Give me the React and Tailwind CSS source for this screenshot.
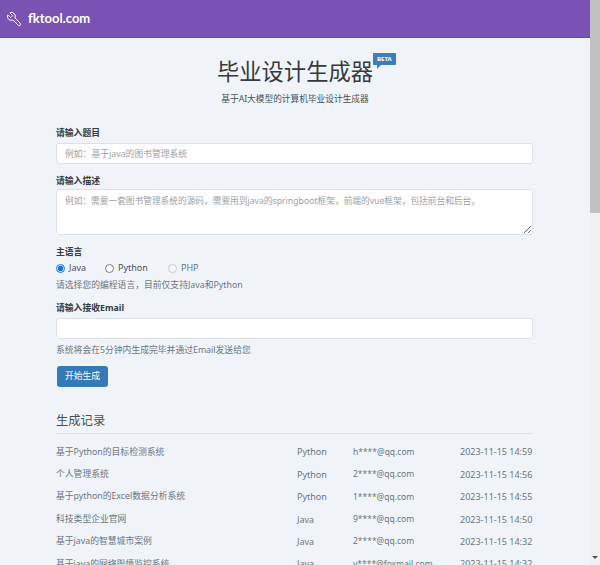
import { Wrench } from 'lucide-react'

const records = [
  { title: '基于Python的目标检测系统', lang: 'Python', email: 'h****@qq.com', time: '2023-11-15 14:59' },
  { title: '个人管理系统', lang: 'Python', email: '2****@qq.com', time: '2023-11-15 14:56' },
  { title: '基于python的Excel数据分析系统', lang: 'Python', email: '1****@qq.com', time: '2023-11-15 14:55' },
  { title: '科技类型企业官网', lang: 'Java', email: '9****@qq.com', time: '2023-11-15 14:50' },
  { title: '基于java的智慧城市案例', lang: 'Java', email: '2****@qq.com', time: '2023-11-15 14:32' },
  { title: '基于java的网络舆情监控系统', lang: 'Java', email: 'y****@foxmail.com', time: '2023-11-15 14:32' },
]

const font = 'font-["Noto_Sans","Noto_Sans_CJK_SC",sans-serif]'

function Radio({ label, checked = false, disabled = false, className = '' }) {
  return (
    <label className={`flex items-center gap-[4px] text-[9px] ${disabled ? 'text-[#6c757d]' : 'text-[#495057]'} ${className}`}>
      <input
        type="radio"
        name="lang"
        defaultChecked={checked}
        disabled={disabled}
        className="m-0 h-[9px] w-[9px] accent-[#0d6efd]"
      />
      {label}
    </label>
  )
}

export default function App() {
  return (
    <div className={`flex h-[565px] w-[600px] overflow-hidden bg-[#f0f4f9] text-[8.8px] text-[#343a40] ${font}`}>
      <div className="w-[590px] shrink-0">
        {/* header */}
        <header className="flex h-[38px] items-center gap-[6px] border-b border-[#6a469f] bg-[#7952b3] pl-[6px] text-white">
          <Wrench size={16} strokeWidth={1.5} className="-scale-x-100" />
          <span className='font-["Lato",sans-serif] text-[13px] leading-none font-bold'>fktool.com</span>
        </header>

        <main className="px-[56px]">
          {/* title */}
          <div className="flex flex-col items-center pt-[18px]">
            <div className="relative">
              <h1 className="text-[22.3px] leading-[32px] font-normal text-[#343a40]">毕业设计生成器</h1>
              <span className="absolute top-[-3px] left-full rounded-[1px] bg-[#3a7ebc] px-[4px] py-[2px] font-sans text-[6px] leading-[8px] font-bold text-white">
                BETA
              </span>
              <span className="absolute top-[9px] left-[calc(100%+4px)] h-0 w-0 border-t-[4px] border-r-[4px] border-t-[#3a7ebc] border-r-transparent" />
            </div>
            <p className="mt-[4px] text-[8.7px] leading-[14px] text-[#495057]">基于AI大模型的计算机毕业设计生成器</p>
          </div>

          {/* form */}
          <form className="mt-[20px] w-[477px]">
            <label className="block text-[8.8px] leading-[14px] font-bold">请输入题目</label>
            <input
              className="mt-[3px] block h-[21px] w-full rounded-[3px] border border-[#dee2e6] bg-white px-[8px] text-[8.8px] outline-none placeholder:text-[#9a9fa5]"
              placeholder="例如：基于java的图书管理系统"
            />

            <label className="mt-[10px] block text-[8.8px] leading-[14px] font-bold">请输入描述</label>
            <textarea
              className="mt-[1px] block h-[46px] w-full rounded-[3px] border border-[#dee2e6] bg-white px-[8px] py-[4px] text-[8.7px] leading-[14px] outline-none placeholder:text-[#9a9fa5]"
              placeholder="例如：需要一套图书管理系统的源码，需要用到java的springboot框架，前端的vue框架，包括前台和后台。"
            />

            <label className="mt-[10px] block text-[8.8px] leading-[14px] font-bold">主语言</label>
            <div className="mt-[2px] flex h-[14px] items-center">
              <Radio label="Java" checked className="w-[49px]" />
              <Radio label="Python" className="w-[63px]" />
              <Radio label="PHP" disabled />
            </div>
            <p className="mt-[3px] text-[8.8px] leading-[14px] text-[#6c757d]">请选择您的编程语言，目前仅支持Java和Python</p>

            <label className="mt-[9px] block text-[8.8px] leading-[14px] font-bold">请输入接收Email</label>
            <input className="mt-[3px] block h-[21px] w-full rounded-[3px] border border-[#dee2e6] bg-white" />
            <p className="mt-[4px] text-[8.8px] leading-[14px] text-[#6c757d]">系统将会在5分钟内生成完毕并通过Email发送给您</p>

            <button
              type="button"
              className="mt-[9px] ml-[1px] h-[21px] w-[51px] rounded-[3px] bg-[#337ab7] text-[8.8px] text-white"
            >
              开始生成
            </button>
          </form>

          {/* records */}
          <section className="mt-[24px] w-[477px]">
            <h2 className="border-b border-[#dee2e6] pb-[2px] text-[12.3px] leading-[20px] font-normal text-[#495057]">生成记录</h2>
            <div className="mt-[7px]">
              {records.map((r) => (
                <div key={r.time + r.title} className="grid h-[22.4px] grid-cols-[241px_56px_107px_1fr] items-center whitespace-nowrap text-[8.8px] text-[#6c757d]">
                  <span>{r.title}</span>
                  <span className="text-[9px]">{r.lang}</span>
                  <span className="text-[8.5px]">{r.email}</span>
                  <span className="text-[9px]">{r.time}</span>
                </div>
              ))}
            </div>
          </section>
        </main>
      </div>

      {/* scrollbar */}
      <div className="relative w-[10px] shrink-0 bg-[#f1f1f1]">
        <div className="h-[213px] bg-[#c1c1c1]" />
        <span className="absolute right-[2px] bottom-[6px] h-0 w-0 border-x-[3px] border-t-[3px] border-x-transparent border-t-[#505050]" />
      </div>
    </div>
  )
}
